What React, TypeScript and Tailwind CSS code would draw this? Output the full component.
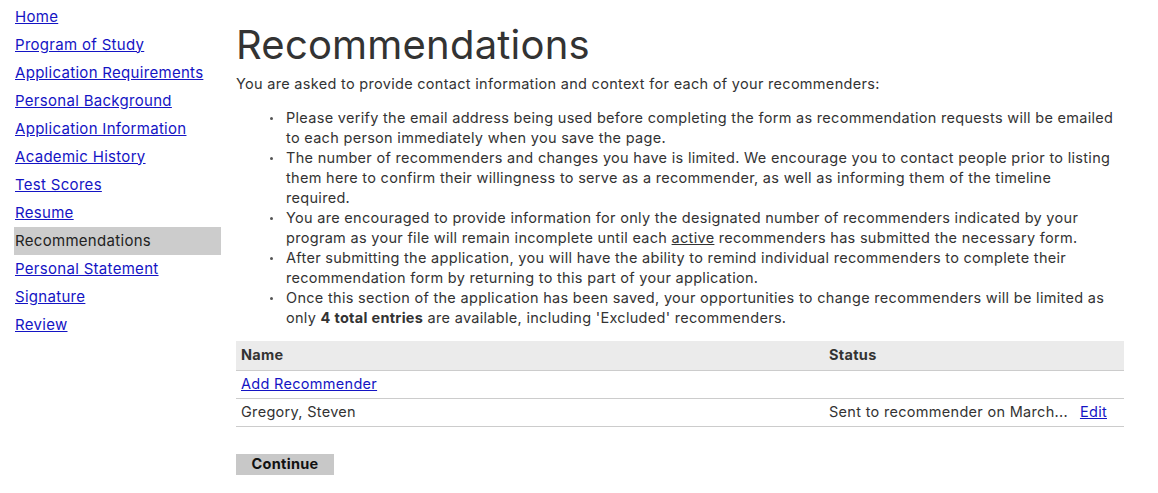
import React from 'react';

const navItems = [
  'Home',
  'Program of Study',
  'Application Requirements',
  'Personal Background',
  'Application Information',
  'Academic History',
  'Test Scores',
  'Resume',
  'Recommendations',
  'Personal Statement',
  'Signature',
  'Review',
];

const App: React.FC = () => {
  return (
    <div className="flex pl-[14px] pt-[3px] text-[#333] text-[14.5px] tracking-[0.3px] font-['Inter','Noto_Sans',sans-serif]">
      <nav className="w-[207px] shrink-0 flex flex-col text-[15px]">
        {navItems.map((item) =>
          item === 'Recommendations' ? (
            <div key={item} className="h-[28px] flex items-center pl-[1px] bg-[#cccccc] text-[#222]">
              {item}
            </div>
          ) : (
            <a key={item} href="#" className="h-[28px] flex items-center pl-[1px] text-[#1414c4] underline">
              {item}
            </a>
          )
        )}
      </nav>
      <main className="ml-[15px] w-[888px]">
        <h1 className="text-[40px] leading-[44px] mt-[20px] tracking-[0.2px] text-[#333]">Recommendations</h1>
        <p className="mt-[7px] leading-[20px]">
          You are asked to provide contact information and context for each of your recommenders:
        </p>
        <ul className="mt-[14px] pl-[50px] leading-[20px]">
          {[
            <>Please verify the email address being used before completing the form as recommendation requests will be emailed to each person immediately when you save the page.</>,
            <>The number of recommenders and changes you have is limited. We encourage you to contact people prior to listing them here to confirm their willingness to serve as a recommender, as well as informing them of the timeline required.</>,
            <>You are encouraged to provide information for only the designated number of recommenders indicated by your program as your file will remain incomplete until each <span className="underline">active</span> recommenders has submitted the necessary form.</>,
            <>After submitting the application, you will have the ability to remind individual recommenders to complete their recommendation form by returning to this part of your application.</>,
            <>Once this section of the application has been saved, your opportunities to change recommenders will be limited as only <b>4 total entries</b> are available, including 'Excluded' recommenders.</>,
          ].map((content, i) => (
            <li key={i} className="flex">
              <span className="shrink-0 w-[3px] h-[3px] rounded-full bg-[#555] mt-[9px] -ml-[16px] mr-[13px]"></span>
              <span className="pr-[6px]">{content}</span>
            </li>
          ))}
        </ul>
        <table className="mt-[13px] w-full border-collapse">
          <thead>
            <tr className="bg-[#ebebeb] border-b border-[#cccccc]">
              <th className="h-[29px] text-left font-bold px-[5px] w-[588px]">Name</th>
              <th className="h-[29px] text-left font-bold px-[5px]">Status</th>
            </tr>
          </thead>
          <tbody>
            <tr className="border-b border-[#cccccc]">
              <td className="h-[28px] px-[5px]">
                <a href="#" className="text-[#1414c4] underline">Add Recommender</a>
              </td>
              <td className="px-[5px]"></td>
            </tr>
            <tr className="border-b border-[#cccccc]">
              <td className="h-[28px] px-[5px]">Gregory, Steven</td>
              <td className="px-[5px]">
                Sent to recommender on March...
                <a href="#" className="ml-[12px] text-[#1414c4] underline">Edit</a>
              </td>
            </tr>
          </tbody>
        </table>
        <button className="mt-[27px] w-[98px] h-[21px] bg-[#c8c8c8] font-bold text-[#111] leading-none">
          Continue
        </button>
      </main>
    </div>
  );
};

export default App;
